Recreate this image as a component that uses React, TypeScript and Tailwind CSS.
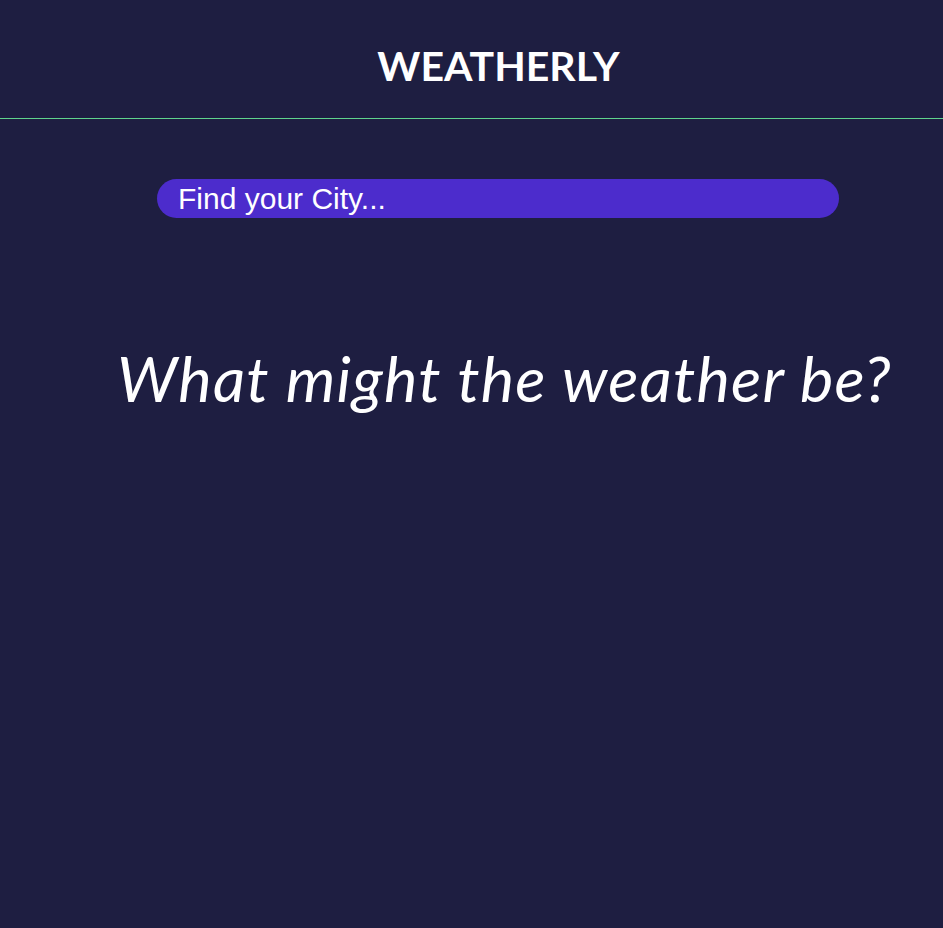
export default function App() {
  return (
    <div className="min-h-[928px] w-full bg-[#1e1e41] text-white">
      <header className="h-[119px] border-b border-[#5fd38d] flex items-center justify-center pl-[54px]">
        <h1 className="font-['Lato',sans-serif] font-bold text-[41px] leading-none pt-[12px]">WEATHERLY</h1>
      </header>
      <div className="pl-[157px] pt-[60px]">
        <div className="w-[682px] h-[39px] rounded-full bg-[#4c2ccc] flex items-center pl-[21px] pt-[1px]">
          <span className="font-['Liberation_Sans',Arial,sans-serif] text-[30px] leading-none text-white">Find your City...</span>
        </div>
      </div>
      <div className="pl-[117px] pt-[128px]">
        <h2 className="font-['Lato',sans-serif] italic font-normal text-[63px] leading-none tracking-[1.2px]">What might the weather be?</h2>
      </div>
    </div>
  );
}
